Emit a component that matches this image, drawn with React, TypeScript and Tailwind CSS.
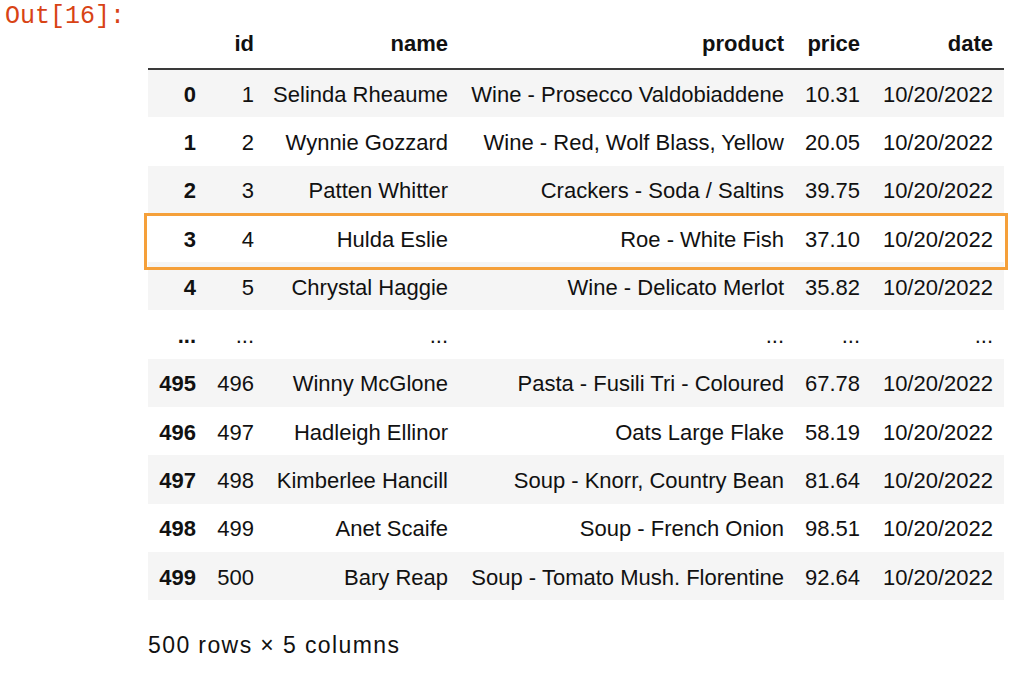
import React from 'react';

type Row = {
  idx: string;
  id: string;
  name: string;
  product: string;
  price: string;
  date: string;
};

const rows: Row[] = [
  { idx: '0', id: '1', name: 'Selinda Rheaume', product: 'Wine - Prosecco Valdobiaddene', price: '10.31', date: '10/20/2022' },
  { idx: '1', id: '2', name: 'Wynnie Gozzard', product: 'Wine - Red, Wolf Blass, Yellow', price: '20.05', date: '10/20/2022' },
  { idx: '2', id: '3', name: 'Patten Whitter', product: 'Crackers - Soda / Saltins', price: '39.75', date: '10/20/2022' },
  { idx: '3', id: '4', name: 'Hulda Eslie', product: 'Roe - White Fish', price: '37.10', date: '10/20/2022' },
  { idx: '4', id: '5', name: 'Chrystal Haggie', product: 'Wine - Delicato Merlot', price: '35.82', date: '10/20/2022' },
  { idx: '...', id: '...', name: '...', product: '...', price: '...', date: '...' },
  { idx: '495', id: '496', name: 'Winny McGlone', product: 'Pasta - Fusili Tri - Coloured', price: '67.78', date: '10/20/2022' },
  { idx: '496', id: '497', name: 'Hadleigh Ellinor', product: 'Oats Large Flake', price: '58.19', date: '10/20/2022' },
  { idx: '497', id: '498', name: 'Kimberlee Hancill', product: 'Soup - Knorr, Country Bean', price: '81.64', date: '10/20/2022' },
  { idx: '498', id: '499', name: 'Anet Scaife', product: 'Soup - French Onion', price: '98.51', date: '10/20/2022' },
  { idx: '499', id: '500', name: 'Bary Reap', product: 'Soup - Tomato Mush. Florentine', price: '92.64', date: '10/20/2022' },
];

const headers = ['', 'id', 'name', 'product', 'price', 'date'];

const App: React.FC = () => {
  return (
    <div className="w-[1024px] h-[688px] bg-white flex text-[#111] overflow-hidden">
      <div className="w-[148px] shrink-0 pl-[5px] pt-[2px]">
        <span className="font-['Liberation_Mono',monospace] text-[25px] leading-[30px] text-[#d84315]">
          Out[16]:
        </span>
      </div>

      <div className="pt-[22px] font-['Liberation_Sans',Arial,sans-serif] text-[22px]">
        <div className="relative">
          <table className="table-fixed border-collapse w-[856px]">
            <colgroup>
              <col className="w-[59px]" />
              <col className="w-[58px]" />
              <col className="w-[194px]" />
              <col className="w-[336px]" />
              <col className="w-[76px]" />
              <col className="w-[133px]" />
            </colgroup>
            <thead>
              <tr className="h-[47px] border-b-2 border-[#3a3a3a]">
                {headers.map((h, i) => (
                  <th key={i} className="text-right font-bold pr-[11px] pb-[3px] whitespace-nowrap">
                    {h}
                  </th>
                ))}
              </tr>
            </thead>
            <tbody>
              {rows.map((r, i) => (
                <tr key={i} className={`h-[48.3px] ${i % 2 === 0 ? 'bg-[#f5f5f5]' : 'bg-white'}`}>
                  <th className="text-right font-bold pr-[11px] pt-[2px] whitespace-nowrap">{r.idx}</th>
                  <td className="text-right pr-[11px] pt-[2px] whitespace-nowrap">{r.id}</td>
                  <td className="text-right pr-[11px] pt-[2px] whitespace-nowrap">{r.name}</td>
                  <td className="text-right pr-[11px] pt-[2px] whitespace-nowrap">{r.product}</td>
                  <td className="text-right pr-[11px] pt-[2px] whitespace-nowrap">{r.price}</td>
                  <td className="text-right pr-[11px] pt-[2px] whitespace-nowrap">{r.date}</td>
                </tr>
              ))}
            </tbody>
          </table>

          {/* highlight box over row 3 */}
          <div className="absolute left-[-4px] top-[191px] w-[864px] h-[57px] border-[3px] border-[#f5a03a] pointer-events-none" />
        </div>

        <p className="mt-[28px] text-[23px] tracking-[1.4px]">500 rows × 5 columns</p>
      </div>
    </div>
  );
};

export default App;
